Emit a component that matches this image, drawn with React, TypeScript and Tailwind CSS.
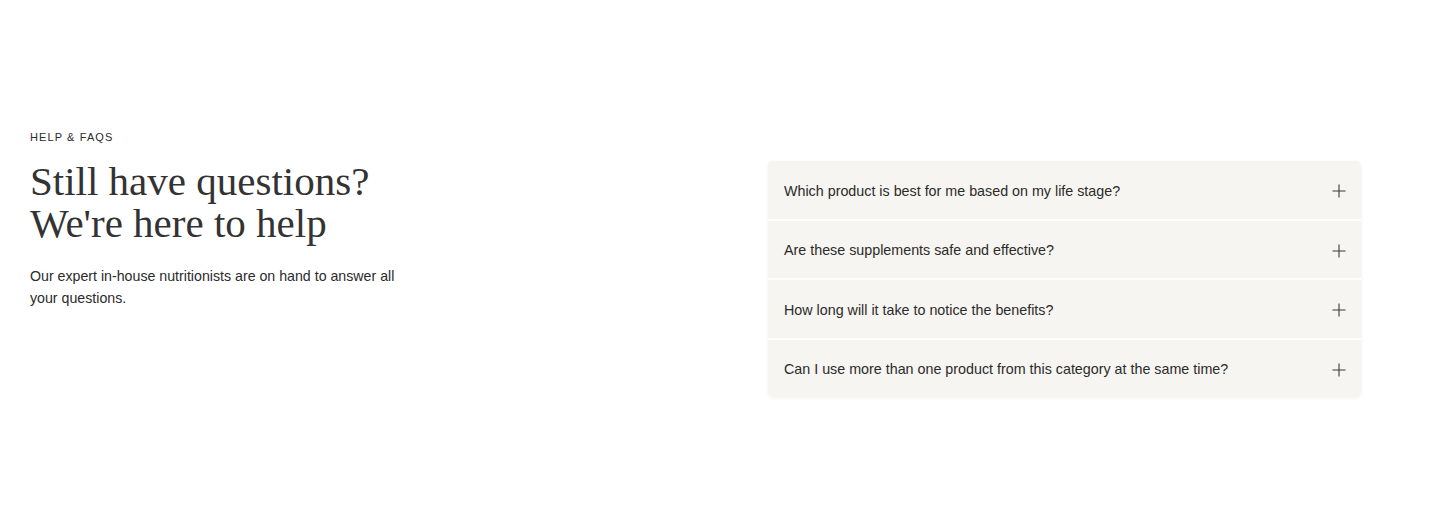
import React from "react";

const faqs = [
  "Which product is best for me based on my life stage?",
  "Are these supplements safe and effective?",
  "How long will it take to notice the benefits?",
  "Can I use more than one product from this category at the same time?",
];

function PlusIcon() {
  return (
    <svg width="14" height="14" viewBox="0 0 14 14" fill="none" aria-hidden>
      <path d="M7 0.5v13M0.5 7h13" stroke="#3a3a3a" strokeWidth="1.1" />
    </svg>
  );
}

export default function App() {
  const sans = { fontFamily: '"Liberation Sans", Arial, sans-serif' };
  return (
    <div className="h-[525px] w-full bg-white text-[#2b2b2b]" style={sans}>
      <div className="flex items-start justify-between pl-[30px] pr-[79px] pt-[130px]">
        <div className="w-[400px]">
          <div className="text-[11px] leading-[14px] tracking-[0.1em] text-[#2b2b2b]">HELP &amp; FAQS</div>
          <h2
            className="mt-[16px] text-[41px] leading-[42px] font-normal text-[#333333]"
            style={{ fontFamily: '"Liberation Serif", "Times New Roman", serif' }}
          >
            Still have questions?
            <br />
            We're here to help
          </h2>
          <p className="mt-[21px] w-[380px] text-[14.2px] leading-[22px] text-[#2b2b2b]">
            Our expert in-house nutritionists are on hand to answer all your questions.
          </p>
        </div>
        <div className="mt-[31px] flex w-[593px] flex-col gap-[2px] overflow-hidden rounded-[5px] bg-white shadow-[0_1px_4px_rgba(0,0,0,0.06)]">
          {faqs.map((q) => (
            <button
              key={q}
              type="button"
              className="flex h-[57.5px] items-center justify-between bg-[#f6f5f1] pl-[16px] pr-[15px] pt-[3px] text-left text-[14.3px] text-[#2b2b2b]"
            >
              <span>{q}</span>
              <PlusIcon />
            </button>
          ))}
        </div>
      </div>
    </div>
  );
}
